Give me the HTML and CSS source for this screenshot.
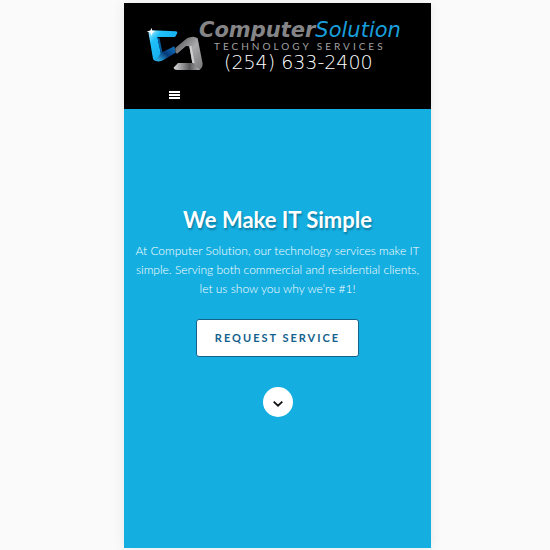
FILE: index.html
```
<!DOCTYPE html>
<html lang="en">
<head>
<meta charset="utf-8">
<meta name="viewport" content="width=device-width, initial-scale=1">
<title>Computer Solution Technology Services</title>
<link rel="stylesheet" href="styles.css">
</head>
<body>
<div class="page">
  <header class="header">
    <div class="brand">
      <svg class="logo" viewBox="16 16 174 144" aria-hidden="true">
        <defs>
          <linearGradient id="blue" x1="0" y1="0" x2="1" y2="1">
            <stop offset="0" stop-color="#b9efff"/>
            <stop offset=".25" stop-color="#20c0fa"/>
            <stop offset="1" stop-color="#0b9de0"/>
          </linearGradient>
          <linearGradient id="blueFold" x1="0" y1="1" x2="1" y2="0">
            <stop offset="0" stop-color="#35c8fa"/>
            <stop offset=".5" stop-color="#063a78"/>
            <stop offset="1" stop-color="#0d79c8"/>
          </linearGradient>
          <linearGradient id="grey" x1="0" y1="0" x2="1" y2="1">
            <stop offset="0" stop-color="#4c4c4e"/>
            <stop offset=".5" stop-color="#aaaaac"/>
            <stop offset="1" stop-color="#77777a"/>
          </linearGradient>
          <linearGradient id="greyFoot" x1="0" y1="0" x2="1" y2="0">
            <stop offset="0" stop-color="#d8d8da"/>
            <stop offset=".6" stop-color="#5a5a5c"/>
            <stop offset="1" stop-color="#b5b5b7"/>
          </linearGradient>
        </defs>
        <path fill="url(#blue)" d="M24 42Q22 32 34 32L105 35Q112 36 109 42L103 52H50L61 103L45 124Q39 123 37 117Z"/>
        <path fill="url(#blueFold)" d="M45 124L61 99L101 80L105 99L67 122Q58 127 45 124Z"/>
        <path fill="#075b9e" d="M50 52L57 57L65 97L61 103Z"/>
        <path fill="url(#grey)" d="M104 85L139 56Q158 46 171 56L186 132Q186 145 175 151L155 130L146 80L136 79L109 102Q103 100 104 85Z"/>
        <path fill="url(#greyFoot)" d="M112 130H155L178 151H110Q98 151 100 143Z"/>
        <path fill="#d0d0d2" d="M146 80L152 78L162 130L155 130Z"/>
        <path fill="#fff" d="M32 24L35 33L44 36L36 39L33 48L29 39L18 35L29 33Z"/>
      </svg>
      <div class="wordmark">
        <div class="name"><span class="name-first">Computer</span><span class="name-second">Solution</span></div>
        <div class="tagline">TECHNOLOGY SERVICES</div>
        <a class="phone" href="tel:2546332400">(254) 633-2400</a>
      </div>
    </div>
    <button class="menu" type="button" aria-label="Menu">
      <svg class="menu-icon" viewBox="0 0 11 8" aria-hidden="true"><path fill="#fff" d="M0 0h11v2H0zM0 3h11v2H0zM0 6h11v2H0z"/></svg>
    </button>
  </header>
  <main class="hero">
    <h1 class="title">We Make IT Simple</h1>
    <p class="intro">At Computer Solution, our technology services make IT simple. Serving both commercial and residential clients, let us show you why we’re #1!</p>
    <a class="request" href="#request">REQUEST SERVICE</a>
    <a class="scroll" id="request" href="#request" aria-label="Scroll down">
      <svg class="chevron" viewBox="0 0 10 6" aria-hidden="true"><path fill="none" stroke="#111" stroke-width="1.8" d="M.7 .7L5 4.7L9.3 .7"/></svg>
    </a>
  </main>
</div>
</body>
</html>
```
FILE: styles.css
```
* {
  box-sizing: border-box;
}

body {
  margin: 0;
  padding-left: 5px;
  background: #fafafa;
  font-family: Lato, sans-serif;
}

.page {
  display: flex;
  flex-direction: column;
  width: 56%;
  min-width: 307px;
  min-height: calc(100vh - 5px);
  margin: 3px auto 2px;
  background: #14aee1;
  box-shadow: 0 0 12px rgba(0, 0, 0, 0.08);
}

.header {
  padding: 16px 22px 4px;
  background: #000;
}

.brand {
  display: flex;
}

.logo {
  flex: none;
  width: 58px;
  height: 48px;
  margin-top: 6px;
}

.wordmark {
  display: flex;
  flex-direction: column;
  white-space: nowrap;
}

.name {
  margin-left: -5px;
  font: italic 21px/22px "DejaVu Sans", sans-serif;
}

.name-first {
  font-weight: 700;
  color: #858587;
}

.name-second {
  color: #189fdb;
}

.tagline {
  margin-left: 10px;
  font-size: 10px;
  line-height: 10px;
  letter-spacing: 3px;
  color: #a2a2a4;
}

.phone {
  margin-left: 20px;
  font: 200 19px/22px "DejaVu Sans", sans-serif;
  color: #fff;
  text-decoration: none;
}

.menu {
  display: flex;
  margin: 12px 0 0 18px;
  padding: 6px 5px;
  border: 0;
  background: none;
}

.menu-icon {
  width: 11px;
  height: 8px;
}

.hero {
  display: flex;
  flex: 1;
  flex-direction: column;
  align-items: center;
  padding: 97px 10px 40px;
  color: #fff;
  text-align: center;
}

.title {
  margin: 0;
  font-size: 22px;
  line-height: 28px;
  font-weight: 700;
  text-shadow: 1px 2px 2px rgba(0, 0, 0, 0.3);
}

.intro {
  margin: 7px 0 21px;
  font-size: 12px;
  line-height: 19px;
  font-weight: 300;
  font-variant-ligatures: none;
}

.request {
  padding: 10px 18px;
  border: 1px solid #14618d;
  border-radius: 3px;
  background: #fff;
  color: #14618d;
  font-size: 11px;
  line-height: 16px;
  font-weight: 700;
  letter-spacing: 2px;
  text-decoration: none;
}

.scroll {
  display: flex;
  align-items: center;
  justify-content: center;
  width: 30px;
  height: 30px;
  margin-top: 30px;
  border-radius: 50%;
  background: #fff;
}

.chevron {
  width: 10px;
  height: 6px;
  margin-top: 3px;
}
```
